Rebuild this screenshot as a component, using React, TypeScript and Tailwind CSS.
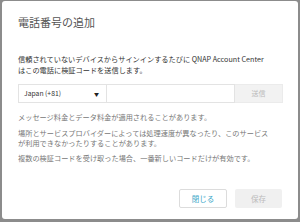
import React from "react";

const font = { fontFamily: '"Noto Sans CJK JP", "Noto Sans", sans-serif' };

export default function App() {
  return (
    <div className="w-[300px] h-[222px] bg-[#8c8c8c] overflow-hidden" style={font}>
      <div className="ml-[2px] mt-[1px] w-[296px] h-[218px] bg-white rounded-[3px] px-[16px] pt-[14px] pb-[11px] flex flex-col">
        <h2 className="text-[11px] leading-[15px] h-[15px] text-[#555] font-normal">電話番号の追加</h2>

        <p className="mt-[24px] text-[7.2px] leading-[11px] text-[#333]">
          信頼されていないデバイスからサインインするたびに QNAP Account Center
          <br />
          はこの電話に検証コードを送信します。
        </p>

        <div className="mt-[8px] flex h-[19px] w-[265px]">
          <div className="w-[89px] h-full border border-[#e3e3e3] flex items-center justify-between pl-[5px] pr-[7px] text-[6.8px] text-[#333]">
            <span>Japan (+81)</span>
            <span className="text-[5px] text-[#222]">▼</span>
          </div>
          <div className="w-[128px] h-full border-y border-r border-[#e3e3e3]" />
          <div className="w-[48px] h-full bg-[#f2f2f2] border-y border-r border-[#ebebeb] flex items-center justify-center text-[7px] text-[#bbb]">
            送信
          </div>
        </div>

        <div className="mt-[9px] text-[7.2px] leading-[10px] text-[#777]">
          <p>メッセージ料金とデータ料金が適用されることがあります。</p>
          <p className="mt-[6px]">
            場所とサービスプロバイダーによっては処理速度が異なったり、このサービス
            <br />
            が利用できなかったりすることがあります。
          </p>
          <p className="mt-[5px]">複数の検証コードを受け取った場合、一番新しいコードだけが有効です。</p>
        </div>

        <div className="mt-auto flex justify-end gap-[8px] pr-[-1px]">
          <div className="w-[48px] h-[19px] border border-[#dcdcdc] rounded-[2px] flex items-center justify-center text-[7.5px] text-[#3aa6c8]">
            閉じる
          </div>
          <div className="w-[47px] h-[19px] bg-[#f0f0f0] rounded-[2px] flex items-center justify-center text-[7.5px] text-[#bbb]">
            保存
          </div>
        </div>
      </div>
    </div>
  );
}
